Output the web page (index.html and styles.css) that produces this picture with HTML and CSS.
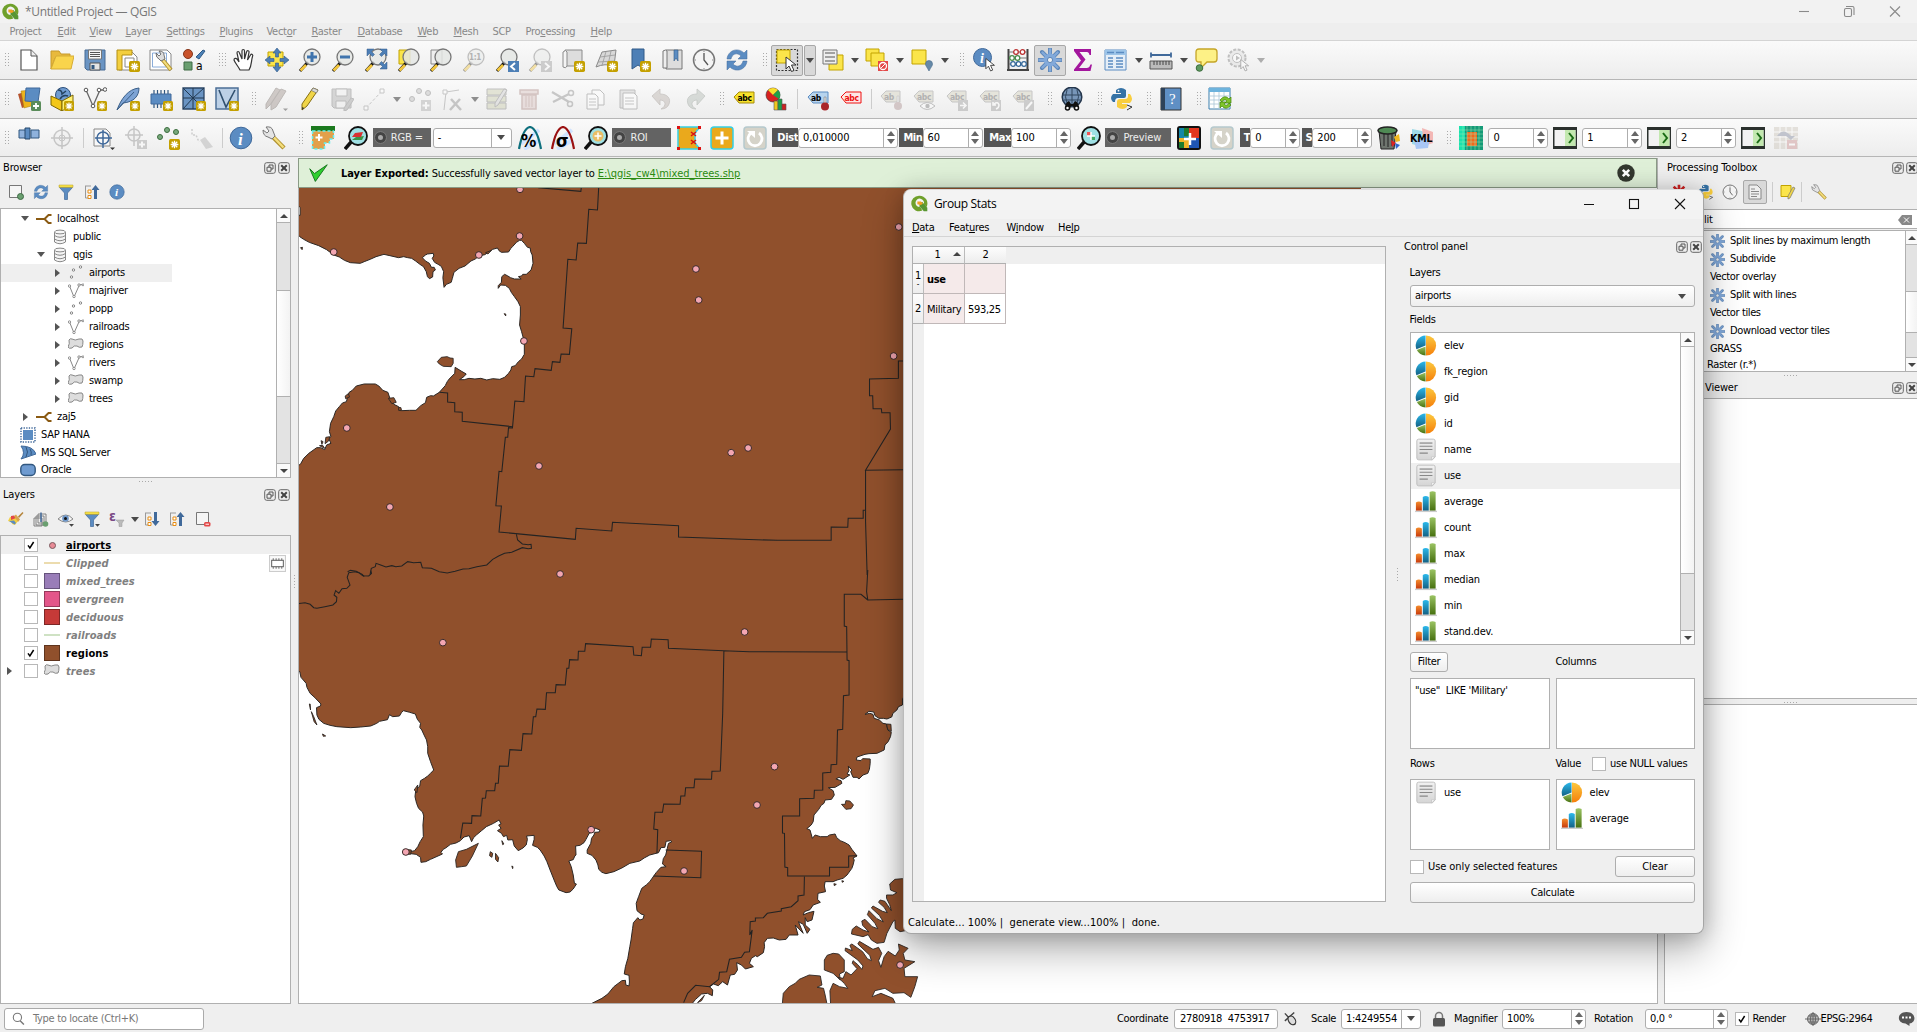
FILE: index.html
```html
<!DOCTYPE html>
<html lang="en">
<head>
<meta charset="utf-8">
<title>*Untitled Project — QGIS</title>
<link rel="stylesheet" href="styles.css">
</head>
<body>
<svg class="paints" width="0" height="0" aria-hidden="true">
<defs>
<linearGradient id="gOr" x1="0" y1="0" x2="0" y2="1"><stop offset="0" stop-color="#fcc93f"/><stop offset="1" stop-color="#f57f0a"/></linearGradient>
<linearGradient id="gBl" x1="0" y1="0" x2="0" y2="1"><stop offset="0" stop-color="#2bb9ec"/><stop offset="1" stop-color="#146184"/></linearGradient>
<linearGradient id="gGr" x1="0" y1="0" x2="0" y2="1"><stop offset="0" stop-color="#9bc463"/><stop offset="1" stop-color="#46700f"/></linearGradient>
<linearGradient id="gRd" x1="0" y1="0" x2="0" y2="1"><stop offset="0" stop-color="#f58d2c"/><stop offset="1" stop-color="#c63a0d"/></linearGradient>
<linearGradient id="gDoc" x1="0" y1="0" x2="0" y2="1"><stop offset="0" stop-color="#f1f1f1"/><stop offset="1" stop-color="#d5d5d5"/></linearGradient>
</defs>
</svg>
<svg class="sprite" aria-hidden="true">
<symbol id="star" viewBox="0 0 10 10"><rect width="10" height="10" rx="1.5" fill="#c4a000"/><path d="M5 1.5v7M1.5 5h7M2.5 2.5l5 5M7.500 2.500l-5 5" stroke="#fff" stroke-width="1.200"/></symbol>
<symbol id="plusb" viewBox="0 0 10 10"><rect width="10" height="10" rx="1.5" fill="#5a8c5a"/><path d="M5 2v6M2 5h6" stroke="#fff" stroke-width="1.800"/></symbol>
<symbol id="lens" viewBox="0 0 24 24"><path d="M10 14L2 23" stroke="#111" stroke-width="3"/><path d="M8 17L2.500 22.500" stroke="#f2c53a" stroke-width="2.600"/><circle cx="14" cy="9" r="8" fill="#e4e6e4" fill-opacity=".85" stroke="#777" stroke-width="1.300"/></symbol>
<symbol id="logo" viewBox="0 0 24 24"><path d="M12 1a11 11 0 1 0 4 21l-3-5a6 6 0 1 1 5-4l4 4A11 11 0 0 0 12 1z" fill="#6fa02b"/><path d="M12 11l4-1 7 8v5h-5l-6-7z" fill="#589632"/><path d="M9 9h5l3 3-3 2-5-1z" fill="#f0a023"/></symbol>
<symbol id="new" viewBox="0 0 24 24"><path d="M4 2h10l6 6v14H4z" fill="#fff" stroke="#555" stroke-width="1.200"/><path d="M14 2v6h6" fill="#eee" stroke="#555"/></symbol>
<symbol id="open" viewBox="0 0 24 24"><path d="M1 3h8l2 3h9v4H5L1 21z" fill="#e8b93c" stroke="#c69a2b"/><path d="M6 8h18l-3 13H1z" fill="#f9d44c" stroke="#d6ac34"/></symbol>
<symbol id="save" viewBox="0 0 24 24"><path d="M2 2h20v20H4l-2-2z" fill="#6a94c3" stroke="#476b94"/><path d="M5.500 2h13v9h-13z" fill="#f7f7f7" stroke="#777"/><path d="M7 4.500h10M7 6.500h10M7 8.500h10" stroke="#555"/><path d="M7 15h10v7H7z" fill="#e4e4e4" stroke="#555"/><path d="M8.500 17h3v4h-3z" fill="#31577f"/></symbol>
<symbol id="layout" viewBox="0 0 24 24"><path d="M3 3h12l6 6v13H3z" fill="#fff" stroke="#888"/><path d="M1 2h15v5H6v15H1z" fill="#f3cf3f" stroke="#b38f14"/><path d="M9 10h9v9H9z" fill="#fff" stroke="#888"/><use href="#star" x="13" y="13" width="11" height="11"/></symbol>
<symbol id="mgr" viewBox="0 0 24 24"><path d="M1 2h17l4 4v16H1z" fill="#fff" stroke="#888"/><path d="M3.500 5h14v14h-14z" fill="none" stroke="#6d98cf" stroke-width=".8"/><path d="M13 11l9 11" stroke="#b0912e" stroke-width="4"/><path d="M13 11l8.500 10.500" stroke="#f4de7c" stroke-width="2"/><path d="M7 5l3 3 2-2-2-3q5 0 5 4l1 4-4 2-2-2Q7 10 7 5z" fill="#ddd" stroke="#666" stroke-width=".9"/></symbol>
<symbol id="style" viewBox="0 0 24 24"><circle cx="6" cy="6" r="4.500" fill="#c9532b" stroke="#84361b"/><path d="M14 9l7-7 2 1-6 8z" fill="#4d82b8" stroke="#2f5a86"/><path d="M2 14h8v8H2z" fill="#6a9f70" stroke="#3f6b45"/><text x="14" y="22" font-size="12">a</text></symbol>
<symbol id="hand" viewBox="0 0 24 24"><path d="M8 22c-2-4-5-7-6-10 0-2 2-2 3-1l2 3L5 5c0-2 2-2 2.500 0L10 11V3c0-2 2.500-2 2.500 0v8l2-7c.5-2 3-1.500 2.500.500L15.500 12l3-5c1-1.500 3-.5 2 1.500C19 13 20 17 17 22z" fill="#fff" stroke="#333" stroke-width="1.200"/></symbol>
<symbol id="pansel" viewBox="0 0 24 24"><path d="M3 4h15v14H3z" fill="#fbe54a" stroke="#c2a300"/><path d="M12 0l4 5h-2.500v4h-3V5H8zM24 12l-5 4v-2.500h-4v-3h4V8zM12 24l4-5h-2.500v-4h-3v4H8zM0 12l5 4v-2.500h4v-3H5V8z" fill="#4d7fb6" stroke="#315a88" stroke-width=".6"/></symbol>
<symbol id="zin" viewBox="0 0 24 24"><use href="#lens"/><path d="M14 4v10M9 9h10" stroke="#3f74ad" stroke-width="3"/></symbol>
<symbol id="zout" viewBox="0 0 24 24"><use href="#lens"/><path d="M9 9h10" stroke="#3f74ad" stroke-width="3"/></symbol>
<symbol id="zfull" viewBox="0 0 24 24"><use href="#lens"/><path d="M3 1h7L7.500 3.500l3 3-2 2-3-3L3 8zM23 1h-7l2.500 2.500-3 3 2 2 3-3L23 8zM23 21h-7l2.500-2.500-3-3 2-2 3 3L23 14z" fill="#4d7fb6" stroke="#315a88" stroke-width=".5"/></symbol>
<symbol id="zsel" viewBox="0 0 24 24"><path d="M2 2h11v14H2z" fill="#fbe54a" stroke="#c2a300"/><use href="#lens"/></symbol>
<symbol id="zlay" viewBox="0 0 24 24"><path d="M2 2h11v14H2z" fill="#eee" stroke="#888"/><use href="#lens"/></symbol>
<symbol id="znat" viewBox="0 0 24 24"><use href="#lens"/><text x="7" y="12" font-size="8" font-weight="bold" fill="#555">1:1</text></symbol>
<symbol id="zlast" viewBox="0 0 24 24"><use href="#lens"/><path d="M13 13h11v11H13z" fill="#4d7fb6"/><path d="M20 15l-4 3.500 4 3.500" fill="none" stroke="#fff" stroke-width="2"/></symbol>
<symbol id="znext" viewBox="0 0 24 24"><use href="#lens"/><path d="M13 13h11v11H13z" fill="#999"/><path d="M17 15l4 3.500-4 3.500" fill="none" stroke="#fff" stroke-width="2"/></symbol>
<symbol id="mapv" viewBox="0 0 24 24"><path d="M4 2h17v16H4z" fill="#ddd" stroke="#8a8a8a"/><path d="M2 4q3-3 4 0v14q-1 3-4 1z" fill="#f4f4f4" stroke="#8a8a8a"/><use href="#star" x="13" y="13" width="11" height="11"/></symbol>
<symbol id="map3" viewBox="0 0 24 24"><path d="M8 4l14-2-2 16q-9-3-18 1z" fill="#d8d8d8" stroke="#8a8a8a"/><path d="M12 3.500l-4 14M17 3l-3 14M6 9l15-2M4 14l16-1" stroke="#999" stroke-width=".8" fill="none"/><use href="#star" x="13" y="13" width="11" height="11"/></symbol>
<symbol id="bmn" viewBox="0 0 24 24"><path d="M5 1h12v20l-6-4-6 4z" fill="#4d7fb6" stroke="#315a88"/><use href="#star" x="13" y="13" width="11" height="11"/></symbol>
<symbol id="bm" viewBox="0 0 24 24"><path d="M6 2h16v19H6z" fill="#ddd" stroke="#777"/><path d="M3 3q3-2 4 0v17H3z" fill="#eee" stroke="#777"/><path d="M14 2h4v11l-2-3-2 3z" fill="#5b8cc2" stroke="#315a88" stroke-width=".6"/></symbol>
<symbol id="clock" viewBox="0 0 24 24"><circle cx="12" cy="12" r="10.500" fill="#f4f4f4" stroke="#777" stroke-width="1.500"/><path d="M12 5v7l4 5" fill="none" stroke="#555" stroke-width="1.300"/><path d="M12 2.500v1.500M12 20v1.500M2.500 12H4M20 12h1.500" stroke="#888"/></symbol>
<symbol id="refresh" viewBox="0 0 24 24"><path d="M2 11C3 2 13-1 19 5l3-3v9h-9l3-3c-4-4-9-2-10 3z" fill="#5b8cc2" stroke="#40699a" stroke-width=".5"/><path d="M22 13c-1 9-11 12-17 6l-3 3v-9h9l-3 3c4 4 9 2 10-3z" fill="#5b8cc2" stroke="#40699a" stroke-width=".5"/></symbol>
<symbol id="cursor" viewBox="0 0 14 16"><path d="M1 1v12l3-3 2.500 5.500 2.500-1L6.500 9H11z" fill="#fff" stroke="#333"/></symbol>
<symbol id="sel" viewBox="0 0 24 24"><path d="M1.500 1.500h21v21h-21z" fill="none" stroke="#333" stroke-dasharray="2 1.500" stroke-width="1.200"/><path d="M2 2h13v13H2z" fill="#fbe54a" stroke="#c2a300"/><use href="#cursor" x="10" y="8" width="14" height="16"/></symbol>
<symbol id="self" viewBox="0 0 24 24"><path d="M8 7h14v15H8z" fill="#fbe54a" stroke="#c2a300"/><path d="M2 2h14v14H2z" fill="#eee" stroke="#777"/><path d="M4 5h10M4 9h10M4 13h10" stroke="#888" stroke-width="1.600"/></symbol>
<symbol id="desel" viewBox="0 0 24 24"><path d="M1 1h13v12H1z" fill="#fbe54a" stroke="#c2a300"/><path d="M6 5h13v13H6z" fill="#fbe54a" stroke="#c2a300"/><path d="M13 13h10v10H13z" fill="#e34848"/><circle cx="18" cy="18" r="3.500" fill="none" stroke="#fff" stroke-width="1.300"/><path d="M16 20l4-4" stroke="#fff"/></symbol>
<symbol id="selloc" viewBox="0 0 24 24"><path d="M2 2h14v14H2z" fill="#fbe54a" stroke="#c2a300"/><path d="M19 23c-2-4-3.500-5-3.500-7a3.500 3.500 0 0 1 7 0c0 2-1.500 3-3.500 7z" fill="#6689a8" stroke="#496b89" stroke-width=".6"/></symbol>
<symbol id="ident" viewBox="0 0 24 24"><circle cx="9.500" cy="9.500" r="9" fill="#5b8cc2" stroke="#40699a"/><text x="7" y="14.500" font-size="14" font-style="italic" font-weight="bold" font-family="Liberation Serif, serif" fill="#fff">i</text><use href="#cursor" x="12" y="9" width="12" height="15"/></symbol>
<symbol id="abacus" viewBox="0 0 24 24"><path d="M2.500 1v21M21.500 1v21M1 22h22" stroke="#444" stroke-width="2"/><path d="M3 4h18M3 10h18M3 16h18" stroke="#777"/><g stroke-width="1.300" fill="#fff"><g stroke="#b33"><circle cx="10" cy="4" r="2.300"/><circle cx="16.500" cy="4" r="2.300"/></g><g stroke="#4a8b4a"><circle cx="6" cy="10" r="2.300"/><circle cx="11.500" cy="10" r="2.300"/></g><g stroke="#36699b"><circle cx="7" cy="16" r="2.300"/><circle cx="12.500" cy="16" r="2.300"/><circle cx="18" cy="16" r="2.300"/></g></g></symbol>
<symbol id="gear" viewBox="0 0 24 24"><path d="M12 1v22M1 12h22M4 4l16 16M20 4L4 20" stroke="#5c86b8" stroke-width="4" stroke-linecap="round"/><path d="M12 1.500v21M1.500 12h21M4.500 4.500l15 15M19.500 4.500l-15 15" stroke="#82a9da" stroke-width="2.400" stroke-linecap="round"/><circle cx="12" cy="12" r="6.500" fill="#82a9da"/><circle cx="12" cy="12" r="2.600" fill="#efefef" stroke="#5c86b8"/></symbol>
<symbol id="sigma" viewBox="0 0 24 24"><path d="M3 1h17v6h-1.500c-.5-2.500-1.500-3-4-3H8.500l6 7.500L8 20h7c3 0 3.500-1 4.500-3.500H21L19.500 23H3v-1.500l7-9L3 3z" fill="#a3169d"/></symbol>
<symbol id="table" viewBox="0 0 24 24"><path d="M1 2h21v20H1z" fill="#e5eef7" stroke="#5b8cc2"/><path d="M1 2h21v5H1z" fill="#9cc4e8"/><path d="M3 4.500h7M12 4.500h8M4 10h5M12 10h7M4 13h5M12 13h7M4 16h5M12 16h7M4 19h5M12 19h7" stroke="#5b8cc2" stroke-width="1.300"/></symbol>
<symbol id="meas" viewBox="0 0 24 24"><path d="M2 7h20M2 4.500v5M22 4.500v5" stroke="#40699a" stroke-width="1.800"/><path d="M1 13h22v8H1z" fill="#bbb" stroke="#555"/><path d="M5 13v4M8 13v4M11 13v4M14 13v4M17 13v4M20 13v4" stroke="#444"/></symbol>
<symbol id="tip" viewBox="0 0 24 24"><path d="M5 1h15q3 0 3 3v7q0 3-3 3h-7l-6 6v-6H5q-3 0-3-3V4q0-3 3-3z" fill="#fdf186" stroke="#c5a527" stroke-width="1.300"/><circle cx="5.500" cy="20" r="3.300" fill="#5f9a60" stroke="#3c6d3e"/></symbol>
<symbol id="run" viewBox="0 0 24 24"><circle cx="10" cy="10" r="8.500" fill="#ddd" stroke="#777" stroke-width="2" stroke-dasharray="3 1.500"/><circle cx="10" cy="10" r="4.500" fill="#fff" stroke="#777"/><path d="M9 7.500l4 2.500-4 2.500z" fill="#777"/><use href="#cursor" x="13" y="10" width="11" height="14"/></symbol>
<symbol id="ds" viewBox="0 0 24 24"><path d="M1 7l10-3 3 13-9 4z" fill="#b5532d"/><path d="M4 4l11-1 3 15-11 3z" fill="#edb41d" stroke="#a37a0c" stroke-width=".5"/><path d="M9 1h14l-2 14-13-1z" fill="#5b8cc2" stroke="#40699a"/><use href="#plusb" x="14" y="14" width="10" height="10"/></symbol>
<symbol id="gpkg" viewBox="0 0 24 24"><circle cx="13" cy="8" r="7.500" fill="#6f9bd0" stroke="#2c4f7a"/><path d="M8 3q4 0 4 4l4-3M10 12q3-5 8-3" stroke="#24425f" stroke-width="1.500" fill="none"/><path d="M1 9l11 5v10L1 18z" fill="#f3c718" stroke="#7d6600"/><path d="M12 14l11-6v9l-11 7z" fill="#fff176" stroke="#7d6600"/><use href="#star" x="14" y="14" width="10" height="10"/></symbol>
<symbol id="vline" viewBox="0 0 24 24"><path d="M3 3l7 16L17 3h4" fill="none" stroke="#666" stroke-width="1.300"/><g fill="#fff" stroke="#555"><circle cx="3" cy="3" r="1.800"/><circle cx="10" cy="19" r="1.800"/><circle cx="16" cy="3" r="1.800"/><circle cx="22" cy="2.500" r="1.800"/></g></symbol>
<symbol id="shp" viewBox="0 0 24 24"><use href="#vline"/><use href="#star" x="14" y="14" width="10" height="10"/></symbol>
<symbol id="quill" viewBox="0 0 24 24"><path d="M1 23C5 12 12 2 23 1c0 8-5 14-16 15z" fill="#7da3d4" stroke="#3b5f88"/><path d="M1 23L18 5" stroke="#3b5f88"/><use href="#star" x="14" y="14" width="10" height="10"/></symbol>
<symbol id="chip" viewBox="0 0 24 24"><path d="M5 3v18M8.500 3v18M12 3v18M15.500 3v18M19 3v18" stroke="#31577f" stroke-width="1.200"/><path d="M2 7h20v10H2z" fill="#5b8cc2" stroke="#40699a"/><use href="#star" x="14" y="14" width="10" height="10"/></symbol>
<symbol id="mesh" viewBox="0 0 24 24"><path d="M1 1h21v21H1z" fill="#6a94c3" stroke="#2b4666" stroke-width="1.300"/><path d="M1 11h21M11 1v21M1 1l10 10M22 1L11 11M11 11l11 11M1 22l10-11" stroke="#22384f" fill="none"/><use href="#star" x="14" y="14" width="10" height="10"/></symbol>
<symbol id="virt" viewBox="0 0 24 24"><path d="M1 1h22v21H1z" fill="#bcd0e6" stroke="#4c6f97" stroke-width="1.500"/><path d="M4 3l7 17L20 3" fill="none" stroke="#31506f" stroke-width="1.600"/><use href="#star" x="14" y="14" width="10" height="10"/></symbol>
<symbol id="pencil" viewBox="0 0 24 24"><path d="M16 1l5 2L10 19l-5 4 0-6z" fill="#f0d548" stroke="#866f13"/><path d="M16 1l5 2-1.500 3-5-2.500z" fill="#d9d9d9" stroke="#777" stroke-width=".7"/><path d="M5 23l.2-3 2 1z" fill="#333"/></symbol>
<symbol id="pencils" viewBox="0 0 24 24"><path d="M12 1l4 2L6 18l-4 4V17zM17 2l5 2L12 20l-5 3v-6z" fill="#9a8d87" stroke="#726862"/><path d="M19 21.500h5l-2.500 2.500z" fill="#333"/></symbol>
<symbol id="saveed" viewBox="0 0 24 24"><path d="M2 2h19v19H4l-2-2z" fill="#aaa" stroke="#777"/><path d="M6 2h11v7H6zM6 14h10v7H6z" fill="#eee" stroke="#777"/><path d="M21 11l3 1-7 11-3 1v-3z" fill="#999" stroke="#777"/></symbol>
<symbol id="seg" viewBox="0 0 24 24"><path d="M3 21L19 4" stroke="#888" stroke-dasharray="3 2"/><path d="M1 19h4v4H1zM17 2h4v4h-4z" fill="#fff" stroke="#888"/></symbol>
<symbol id="pts" viewBox="0 0 24 24"><g fill="#bbb" stroke="#777"><circle cx="4" cy="12" r="2.500"/><circle cx="11" cy="4" r="2.500"/><circle cx="20" cy="6" r="2.500"/></g><path d="M13 13h10v11H13z" fill="#aaa"/><path d="M18 15v7M14.500 18.500h7" stroke="#fff" stroke-width="2"/></symbol>
<symbol id="vtx" viewBox="0 0 24 24"><path d="M4 23L6 5l13-2" fill="none" stroke="#888"/><path d="M3 3h4v4H3z" fill="#fff" stroke="#888"/><path d="M10 23L20 12M11 12l10 11" stroke="#888" stroke-width="2.500"/></symbol>
<symbol id="attr" viewBox="0 0 24 24"><path d="M2 2h19v6H2zM2 9h19v6H2zM2 16h19v6H2z" fill="#c8cba8" stroke="#777"/><path d="M19 2l3 1-9 15-3 2v-4z" fill="#ccc" stroke="#777"/></symbol>
<symbol id="bin" viewBox="0 0 24 24"><path d="M2 3h18v4H2zM4 8h14v14H4z" fill="#d8c0bd" stroke="#a8837d" stroke-width="1.500"/><path d="M8 9v11M11 9v11M14 9v11" stroke="#a8837d"/></symbol>
<symbol id="cut" viewBox="0 0 24 24"><path d="M1 5l17 10M2 15L18 7" stroke="#888" stroke-width="2.200"/><circle cx="20" cy="6" r="2.500" fill="none" stroke="#888" stroke-width="1.500"/><circle cx="19" cy="17" r="2.500" fill="none" stroke="#888" stroke-width="1.500"/></symbol>
<symbol id="copy" viewBox="0 0 24 24"><path d="M8 3h8l4 4v11H8z" fill="#fff" stroke="#777"/><path d="M3 7h8l3 3v12H3z" fill="#fff" stroke="#777"/><path d="M5 12h7M5 15h7M5 18h7" stroke="#888"/></symbol>
<symbol id="paste" viewBox="0 0 24 24"><path d="M3 3h15v18H3z" fill="#ccc" stroke="#777"/><path d="M6 6h11l3 3v13H6z" fill="#fff" stroke="#777"/><path d="M8 11h9M8 14h9M8 17h9" stroke="#888"/></symbol>
<symbol id="undo" viewBox="0 0 24 24"><path d="M2 9l8-7v5c8 0 11 5 9 10-1 3-4 5-8 5 6-3 5-9-1-9v5z" fill="#b7aea8" stroke="#8d857f" stroke-width=".8"/></symbol>
<symbol id="redo" viewBox="0 0 24 24"><path d="M22 9l-8-7v5C6 7 3 12 5 17c1 3 4 5 8 5-6-3-5-9 1-9v5z" fill="#aeb7b0" stroke="#858d87" stroke-width=".8"/></symbol>
<symbol id="tagy" viewBox="0 0 24 24"><path d="M2 10l5-5h15v11H7z" fill="#f7e12c" stroke="#a48b0b"/><text x="5.500" y="13.500" font-size="8.500" font-weight="bold">abc</text></symbol>
<symbol id="tagb" viewBox="0 0 24 24"><path d="M2 10l5-5h15v11H7z" fill="#b7d4ee" stroke="#5b8cc2"/><text x="5" y="13.500" font-size="8.500" font-weight="bold">ab</text><path d="M18 10h2v7h-2z" fill="#ddd" stroke="#777" stroke-width=".5"/><circle cx="19" cy="19.500" r="4" fill="#a9262b"/></symbol>
<symbol id="tagr" viewBox="0 0 24 24"><path d="M2 10l5-5h15v11H7z" fill="#fde6e6" stroke="#e11"/><text x="5.500" y="13.500" font-size="8.500" font-weight="bold" fill="#e11">abc</text></symbol>
<symbol id="tag0" viewBox="0 0 24 24"><path d="M2 9l5-5h14v11H7z" fill="#d0cdb8" stroke="#888"/><text x="5" y="12.500" font-size="8.500" font-weight="bold" fill="#555">abc</text></symbol>
<symbol id="tagm" viewBox="0 0 24 24"><use href="#tag0"/><path d="M13 13h10v11H13z" fill="#999"/><path d="M15 18.500h6M18 15.500l3 3-3 3" stroke="#fff" stroke-width="1.500" fill="none"/></symbol>
<symbol id="tagt" viewBox="0 0 24 24"><use href="#tag0"/><path d="M13 13h10v11H13z" fill="#999"/><path d="M16 17q4-3 5 1 0 3-3 4M15 15v3h3" stroke="#fff" stroke-width="1.500" fill="none"/></symbol>
<symbol id="tagc" viewBox="0 0 24 24"><use href="#tag0"/><path d="M13 13h10v11H13z" fill="#999"/><path d="M15 22l6-7" stroke="#fff" stroke-width="2" fill="none"/></symbol>
<symbol id="tagp" viewBox="0 0 24 24"><path d="M2 9l5-5h14v11H7z" fill="#d0cdb8" stroke="#888"/><text x="5" y="12.500" font-size="8.500" font-weight="bold" fill="#555">ab</text><path d="M18 9h2v7h-2z" fill="#ddd" stroke="#777" stroke-width=".5"/><circle cx="19" cy="19" r="4" fill="#a98c8c"/></symbol>
<symbol id="tage" viewBox="0 0 24 24"><use href="#tag0"/><path d="M8 19q7-7 15 0-8 7-15 0z" fill="#fff" stroke="#777"/><circle cx="15.500" cy="19" r="2.200" fill="#777"/></symbol>
<symbol id="diag" viewBox="0 0 24 24"><circle cx="8" cy="8" r="7" fill="#d72020" stroke="#333" stroke-width=".6"/><path d="M8 8L3 3a7 7 0 0 1 10 0z" fill="#f7e12c"/><path d="M8 8l5-5a7 7 0 0 1 1 9z" fill="#1fa04a"/><path d="M9 14h4v9H9z" fill="#f2c81d" stroke="#555" stroke-width=".6"/><path d="M13 12h4v11h-4z" fill="#1fa04a" stroke="#555" stroke-width=".6"/><path d="M17 17h4v6h-4z" fill="#c22" stroke="#555" stroke-width=".6"/></symbol>
<symbol id="globe" viewBox="0 0 24 24"><circle cx="12" cy="10" r="9.800" fill="#7896b8" stroke="#24364c" stroke-width="1.500"/><path d="M3 8h18M4 13h16M12 1v17M7 3q-3 7 0 13M17 3q3 7 0 13" stroke="#31475f" fill="none"/><path d="M5 22q0-7 4-8l2 3h2l2-3q4 1 4 8h-5l-1-3h-2l-1 3z" fill="#111"/><circle cx="7.500" cy="21" r="2" fill="#fff" stroke="#111" stroke-width="1.500"/><circle cx="16.500" cy="21" r="2" fill="#fff" stroke="#111" stroke-width="1.500"/></symbol>
<symbol id="py" viewBox="0 0 24 24"><path d="M6 3q5-4 10 0v6q0 2-2 2H8q-3 0-3 4H3Q-1 11 3 7h8V6H6z" fill="#3572a5"/><path d="M18 7h2q4 5 0 9h-8v1h5v3q-4 4-10 0v-5q0-3 3-3h5q3 0 3-3z" fill="#f9ce3e"/><circle cx="8.500" cy="3.700" r=".9" fill="#fff"/><path d="M17 18l5 2-5 3" fill="none" stroke="#333"/></symbol>
<symbol id="help" viewBox="0 0 24 24"><path d="M2 1h20v22H2z" fill="#5f8fc4" stroke="#333"/><path d="M2 1h4v22H2z" fill="#2e4259"/><text x="10" y="17" font-size="15" font-family="Liberation Serif, serif" fill="#fff">?</text></symbol>
<symbol id="tblr" viewBox="0 0 24 24"><path d="M1 1h21v21H1z" fill="#fff" stroke="#3b7fae"/><path d="M1 1h21v4H1z" fill="#6db3dd"/><path d="M1 9h21M1 13h21M1 17h21M6 5v17M11 5v17M16 5v17" stroke="#a9c5d6" stroke-width=".8"/><path d="M12 13q5-6 9-1l2-2v6h-6l2-2q-3-3-5 1zM23 18q-5 6-9 1l-2 2v-6h6l-2 2q3 3 5-1z" fill="#7fc42c" stroke="#41830a" stroke-width=".7"/></symbol>
<symbol id="georef" viewBox="0 0 24 24"><path d="M2 4h7v8H2zM14 4h8v8h-8z" fill="#8fb2dc" stroke="#31577f"/><path d="M8 2h5v11H8z" fill="#5b8cc2" stroke="#27486c"/></symbol>
<symbol id="cross" viewBox="0 0 24 24"><circle cx="12" cy="12" r="8" fill="#eee" stroke="#888" stroke-width="1.500"/><path d="M12 1v22M1 12h22" stroke="#888" stroke-width="1.500"/><circle cx="12" cy="12" r="3" fill="none" stroke="#888"/></symbol>
<symbol id="crossp" viewBox="0 0 24 24"><circle cx="10" cy="9" r="6" fill="#eee" stroke="#888" stroke-width="1.500"/><path d="M10 0v20M1 9h18" stroke="#888" stroke-width="1.500"/><path d="M13 14h10v9H13z" fill="#999"/><path d="M18 15.500v6M15 18.500h6" stroke="#fff" stroke-width="2"/></symbol>
<symbol id="crossb" viewBox="0 0 24 24"><path d="M3 3h12l4 4v13H3z" fill="#f8f8f8" stroke="#888"/><circle cx="12" cy="12" r="6" fill="none" stroke="#40699a" stroke-width="1.500"/><path d="M12 4v18M4 12h17" stroke="#40699a" stroke-width="1.500"/><path d="M19 21.500h5l-2.500 2.500z" fill="#333"/></symbol>
<symbol id="ptsg" viewBox="0 0 24 24"><g fill="#79a97d" stroke="#3c6d3e"><circle cx="3" cy="11" r="2.500"/><circle cx="10" cy="4" r="2.500"/><circle cx="19" cy="6" r="2.500"/></g><use href="#star" x="12" y="13" width="11" height="11"/></symbol>
<symbol id="path" viewBox="0 0 24 24"><path d="M2 3v6h4l3 7" stroke="#999" fill="none" stroke-dasharray="2 1.500" stroke-width="1.500"/><path d="M10 14l5-3 8 10-7 2z" fill="#aaa"/></symbol>
<symbol id="info" viewBox="0 0 24 24"><circle cx="12" cy="12" r="10.800" fill="#5b8cc2" stroke="#40699a"/><text x="9" y="18.500" font-size="17" font-style="italic" font-weight="bold" font-family="Liberation Serif, serif" fill="#fff">i</text></symbol>
<symbol id="wrench" viewBox="0 0 24 24"><path d="M10 10l12 12" stroke="#b0912e" stroke-width="4.500"/><path d="M11 10.500l10.500 11" stroke="#f4de7c" stroke-width="2.500"/><path d="M1 4l4 3 2-2-3-4q6-1 7 4l2 5-3 3-4-2Q1 10 1 4z" fill="#e4e4e4" stroke="#777"/></symbol>
<symbol id="roi" viewBox="0 0 24 24"><path d="M0 0h24v5H0z" fill="#1c7a1f"/><path d="M1 5h22v8h-4v4h-5v6H1z" fill="#e2a04a"/><path d="M1.500 5h21v8h-4v4h-5v6h-12z" fill="none" stroke="#6ee" stroke-width="1.500" stroke-dasharray="3 2"/><path d="M8 8v7M4.500 11.500h7" stroke="#fff" stroke-width="2"/></symbol>
<symbol id="bl" viewBox="0 0 24 24"><path d="M8 15L1 23" stroke="#111" stroke-width="3.500"/><circle cx="14" cy="10" r="9" fill="#9fe0e4" stroke="#111" stroke-width="1.800"/></symbol>
<symbol id="bl1" viewBox="0 0 24 24"><use href="#bl"/><path d="M8 14l10 0 2-4-8 1z" fill="#3a9447"/><path d="M8 11l9 0 2-5-8 1z" fill="#d83131"/></symbol>
<symbol id="bl2" viewBox="0 0 24 24"><use href="#bl"/><circle cx="14" cy="10" r="5.500" fill="#e9bd66"/><path d="M14 6.500v7M10.500 10h7" stroke="#fff" stroke-width="1.500"/></symbol>
<symbol id="bl3" viewBox="0 0 24 24"><use href="#bl"/><path d="M10 6h4v4h-4z" fill="#e55"/><path d="M14 10h4v4h-4z" fill="#4a6"/><path d="M14 6v8M10 10h8" stroke="#fff" stroke-width="1.500"/></symbol>
<symbol id="pct" viewBox="0 0 24 24"><path d="M3 18l18-14M6 23L22 14" stroke="#cfe3ff" stroke-width="4"/><path d="M1 23Q5 2 12 1q7 1 11 22" fill="none" stroke="#0d6f7d" stroke-width="2.200"/><text x="3" y="21" font-size="17" font-weight="bold">%</text></symbol>
<symbol id="sig" viewBox="0 0 24 24"><path d="M3 18l18-14M6 23L22 14" stroke="#cfe3ff" stroke-width="4"/><path d="M1 23Q5 2 12 1q7 1 11 22" fill="none" stroke="#9b1111" stroke-width="2.200"/><text x="5" y="21" font-size="18" font-weight="bold">σ</text></symbol>
<symbol id="roix" viewBox="0 0 24 24"><path d="M1 1h22l-5 6v10l5 6H1z" fill="#eaa91c" stroke="#35cfe5" stroke-width="1.500"/><path d="M0 0h3v3H0zM21 0h3v3h-3zM0 21h3v3H0zM21 21h3v3h-3z" fill="#d11"/><path d="M14 6l5 4M19 6l-5 4M14 14l5 4M19 14l-5 4" stroke="#d11" stroke-width="1.500"/></symbol>
<symbol id="roip" viewBox="0 0 24 24"><rect x="1" y="1" width="22" height="22" rx="3" fill="#eaa91c" stroke="#35cfe5" stroke-width="1.500"/><path d="M12 5.500v13M5.500 12h13" stroke="#fff" stroke-width="3"/></symbol>
<symbol id="roir" viewBox="0 0 24 24"><rect x="1" y="1" width="22" height="22" rx="3" fill="#d5d3c9" stroke="#b5c9cd" stroke-width="1.500"/><path d="M8 7a7 7 0 1 0 8 0" fill="none" stroke="#fff" stroke-width="2.800"/><path d="M4 5h8v7z" fill="#fff"/></symbol>
<symbol id="rgbp" viewBox="0 0 24 24"><rect width="24" height="24" rx="3" fill="#111"/><path d="M2 2h10v10H2z" fill="#1287a8"/><path d="M12 2h10v10H12z" fill="#e3361e"/><path d="M2 12h10v10H2z" fill="#f0b429"/><path d="M12 12h10v10H12z" fill="#1f56b5"/><path d="M7 2h5v8H7zM2 16h5v6H2z" fill="#1d7c2f"/><path d="M13 7v12M7 13h12" stroke="#fff" stroke-width="2.500"/></symbol>
<symbol id="can" viewBox="0 0 24 24"><path d="M2 5h17l-2 18H4z" fill="#6e756e" stroke="#222"/><path d="M7 8v12M11 8v13M15 8v12" stroke="#222"/><ellipse cx="10.500" cy="4.500" rx="9.500" ry="3.500" fill="#4f8a54" stroke="#222" stroke-width="1.600"/><path d="M17 11l5-3 1 7-4 1z" fill="#f1b81f"/><path d="M14 14l5 3-4 4z" fill="#d22"/><path d="M18 17l5 2-4 4z" fill="#36c"/></symbol>
<symbol id="kml" viewBox="0 0 24 24"><path d="M2 3l10 2 8 6-4 11-14-4z" fill="#9fdbe8"/><path d="M12 2l11 4v11l-9 3z" fill="#f3b7b5"/><path d="M4 14l16-2-2 10-12 1z" fill="#a9c7f5"/><text x="0" y="16" font-size="10.500" font-weight="bold">KML</text></symbol>
<symbol id="grid" viewBox="0 0 24 24"><path d="M0 0h24v24H0z" fill="#159a78"/><path d="M0 0h6v24H0z" fill="#19e2ae"/><path d="M8 6h10v14H8z" fill="#f26a1c"/><path d="M0 4h24M0 8h24M0 12h24M0 16h24M0 20h24M4 0v24M8 0v24M12 0v24M16 0v24M20 0v24" stroke="#9de8b0" stroke-opacity=".6" stroke-width=".8"/></symbol>
<symbol id="next" viewBox="0 0 24 24"><path d="M0 1h24v22H0z" fill="#2b312e"/><path d="M1.500 4h21v16h-21z" fill="#f2f2f2"/><path d="M12 4h10.500v16H12z" fill="#c3e8b0"/><path d="M16 7l4 5-4 5" fill="none" stroke="#1b6b16" stroke-width="2"/></symbol>
<symbol id="gridx" viewBox="0 0 24 24"><path d="M0 1h24v22H0z" fill="#c9c2b6"/><path d="M0 6h24M0 11h24M0 16h24M6 1v22M12 1v22M18 1v22" stroke="#fff"/><path d="M3 10q6-9 14 0h4l-4 4-5-4" fill="#7a8298"/><path d="M13 14h10v9H13z" fill="#c98a8a"/><path d="M15 18.500h6" stroke="#fff" stroke-width="2"/></symbol>
<symbol id="pie" viewBox="0 0 24 24"><path d="M12 1a11 11 0 0 1 0 22z" fill="url(#gOr)"/><path d="M11.500 1v11L1.500 16A11 11 0 0 1 11.500 1z" fill="url(#gBl)"/><path d="M11.500 13v10A11 11 0 0 1 2 17z" fill="url(#gGr)"/></symbol>
<symbol id="bars" viewBox="0 0 24 24"><path d="M1 13q3-2 6.500 0v9H1z" fill="url(#gRd)"/><path d="M8.500 7q3-2 6.500 0v15H8.500z" fill="url(#gBl)"/><path d="M16 1.500q3-1.500 6.500 0V22H16z" fill="url(#gGr)"/><path d="M0 22.800h24" stroke="#ccc" stroke-width="1.500"/></symbol>
<symbol id="doc" viewBox="0 0 24 24"><path d="M4 .7h16q2 0 2 2V20l-3 3.300H4q-2 0-2-2V2.700q0-2 2-2z" fill="url(#gDoc)" stroke="#bbb"/><path d="M5 5h14" stroke="#aaa" stroke-width="2"/><path d="M5 8.500h14M5 12h14M5 16h9" stroke="#888" stroke-width="1.200"/><path d="M18 23.300V20h4z" fill="#fff" stroke="#bbb" stroke-width=".7"/></symbol>
<symbol id="float" viewBox="0 0 12 12"><rect x=".7" y=".7" width="10.600" height="10.600" rx="2" fill="#eee" stroke="#666"/><path d="M5 3h4v4H5z" fill="none" stroke="#555"/><path d="M3 5.200h4v4H3z" fill="#eee" stroke="#555"/></symbol>
<symbol id="close" viewBox="0 0 12 12"><rect x=".7" y=".7" width="10.600" height="10.600" rx="2" fill="#eee" stroke="#666"/><path d="M3.200 3.200l5.600 5.600M8.800 3.200L3.200 8.800" stroke="#444" stroke-width="2"/></symbol>
<symbol id="addl" viewBox="0 0 16 16"><path d="M1.500 1.500h12v12h-12z" fill="#f5f5f5" stroke="#777"/><circle cx="12.500" cy="12.500" r="3" fill="#6a9f70" stroke="#3f6b45"/></symbol>
<symbol id="reml" viewBox="0 0 16 16"><path d="M1.500 1.500h12v12h-12z" fill="#f5f5f5" stroke="#777"/><rect x="9" y="11" width="6.500" height="4.500" rx="1.500" fill="#e34848"/><path d="M10.500 13.200h3.500" stroke="#fff"/></symbol>
<symbol id="funnel" viewBox="0 0 16 16"><path d="M1.500 3.500h13L9.500 9v6.500H6.500V9z" fill="#5b8cc2" stroke="#40699a" stroke-width=".7"/><path d="M1 1h14v2.300H1z" fill="#fbe54a" stroke="#b09a20" stroke-width=".5"/></symbol>
<symbol id="funneld" viewBox="0 0 16 16"><use href="#funnel"/><path d="M11 13h5l-2.500 2.800z" fill="#444"/></symbol>
<symbol id="treeup" viewBox="0 0 16 16"><path d="M1 2h6M1.500 2v12h4" stroke="#999" fill="none"/><path d="M4 6h3v3H4zM4 11.500h3v3H4z" fill="#fff" stroke="#e88d13"/><path d="M11.500 1l4 5h-2.500v9h-3V6H7.500z" fill="#40699a"/></symbol>
<symbol id="treedn" viewBox="0 0 16 16"><path d="M1 2h6M1.500 2v12h4" stroke="#999" fill="none"/><path d="M4 6h3v3H4zM4 11.500h3v3H4z" fill="#fff" stroke="#e88d13"/><path d="M11.500 15l4-5h-2.500V1h-3v9H7.500z" fill="#40699a"/></symbol>
<symbol id="brush" viewBox="0 0 16 16"><path d="M2 6l5-1 3 5-3 4-3-1q0-2-4-3z" fill="#f3cf3f"/><path d="M3 5l3-.5 2 2.500-5 2z" fill="#e34848"/><path d="M1 10l5-.5 2 2.500-1.500 1.500z" fill="#5b8cc2"/><path d="M6 5l2-1.500 4 5L10 11z" fill="#d9a54b"/><path d="M10 5.500l4.500-4.500 1 1-4.500 5z" fill="#b5853c"/></symbol>
<symbol id="grp" viewBox="0 0 16 16"><path d="M5 3h8v9H5zM3 5h8v9H3zM1 7h8v8H1z" fill="#eee" stroke="#777" stroke-width=".9"/><path d="M8 11V1.500" stroke="#40699a" stroke-width="1.500"/><circle cx="12.500" cy="13" r="2.800" fill="#6a9f70"/></symbol>
<symbol id="eye" viewBox="0 0 16 16"><path d="M0 8q8-8 15 0-7 6-15 0z" fill="#f4f4f4" stroke="#888"/><circle cx="7.500" cy="7.500" r="3.300" fill="#6e97c9"/><circle cx="7.500" cy="7.500" r="1.500" fill="#111"/><path d="M11 13h5l-2.500 2.800z" fill="#444"/></symbol>
<symbol id="eps" viewBox="0 0 16 16"><text x="0" y="9.500" font-size="14" font-weight="bold" fill="#7b4a86">ε</text><path d="M7 9h8l-2 3v3.500h-3V12z" fill="#bbb" stroke="#999" stroke-width=".5"/></symbol>
<symbol id="plug" viewBox="0 0 16 16"><path d="M0 8h9M15.500 4h-3L8.500 8l4 4h3" fill="none" stroke="#8a5a12" stroke-width="2"/></symbol>
<symbol id="db" viewBox="0 0 16 16"><path d="M2.500 3v10q5.500 3.500 11 0V3" fill="#f4f4f4" stroke="#888"/><ellipse cx="8" cy="3" rx="5.500" ry="1.900" fill="#f7f7f7" stroke="#888"/><path d="M2.500 6.500q5.500 3.500 11 0M2.500 10q5.500 3.500 11 0" fill="none" stroke="#888"/></symbol>
<symbol id="lpt" viewBox="0 0 16 16"><g fill="#fff" stroke="#777" stroke-width=".9"><circle cx="3.500" cy="12" r="1.200"/><circle cx="5.500" cy="5" r="1.200"/><circle cx="12.500" cy="2" r="1.200"/></g></symbol>
<symbol id="lln" viewBox="0 0 16 16"><path d="M1.500 3l4.500 11L11.500 1.700H15" fill="none" stroke="#888"/><g fill="#fff" stroke="#777" stroke-width=".8"><circle cx="1.500" cy="3" r="1.200"/><circle cx="6" cy="13.500" r="1.200"/><circle cx="11" cy="2" r="1.200"/><circle cx="15" cy="1.800" r="1"/></g></symbol>
<symbol id="lpg" viewBox="0 0 16 16"><path d="M1 3q1-2 3-1 3 2 7 0 4-1 4 2 0 4-1 6-3 1-5-1-3-1-5 2-3 1-4-1 2-3 1-7z" fill="#ddd" stroke="#888"/></symbol>
<symbol id="sap" viewBox="0 0 16 16"><rect x="1" y="1" width="14" height="14" fill="none" stroke="#40699a" stroke-width="1.500" stroke-dasharray="1.300 1.300"/><path d="M3 3h10v10H3z" fill="#5b8cc2"/></symbol>
<symbol id="ms" viewBox="0 0 16 16"><path d="M1 1q12 0 15 8L1 14q5-6 0-13z" fill="#5b8cc2" stroke="#40699a"/><path d="M6 2q3 5 0 10M10 4q2 3 1 6" fill="none" stroke="#27486c" stroke-width=".8"/></symbol>
<symbol id="ora" viewBox="0 0 16 16"><rect x=".8" y="2.500" width="14.400" height="11" rx="4" fill="#6f9bd0" stroke="#31577f" stroke-width="1.400"/></symbol>
<symbol id="mem" viewBox="0 0 16 16"><rect x=".5" y=".5" width="15" height="15" fill="#fafafa" stroke="#ccc"/><path d="M4 3v10M6.700 3v10M9.300 3v10M12 3v10" stroke="#777"/><rect x="2.500" y="5" width="11" height="6" fill="#fff" stroke="#666"/></symbol>
<symbol id="tick" viewBox="0 0 16 16"><path d="M4 8.500l2.500 3.500L11.500 4" fill="none" stroke="#000" stroke-width="2"/></symbol>
<symbol id="paper" viewBox="0 0 16 16"><path d="M2 1h8l4 4v10H2z" fill="#eee" stroke="#888"/><path d="M4 5h4M4 7.500h8M4 10h8M4 12.500h6" stroke="#888"/></symbol>
<symbol id="note" viewBox="0 0 16 16"><path d="M1 1.500h10v9l-2 2H1z" fill="#fbe54a" stroke="#c2a300"/><path d="M13 3l2 1-5 10-2 1V12z" fill="#f0d548" stroke="#777" stroke-width=".7"/></symbol>
<symbol id="redgear" viewBox="0 0 24 24"><path d="M12 1v22M1 12h22M4 4l16 16M20 4L4 20" stroke="#c22" stroke-width="4"/></symbol>
</svg>

<header class="titlebar"><svg class="i16"><use href="#logo"/></svg><span class="cap">*Untitled Project — QGIS</span>
<svg class="winctl" viewBox="0 0 116 14"><g fill="none" stroke="#8a8a8a" stroke-width="1.100"><path d="M3 7.500h10"/><rect x="48.500" y="4.500" width="7" height="8" rx="1.500"/><path d="M50 2.500h6.500q1.500 0 1.500 1.500v7"/><path d="M94 2.500l10 10M104 2.500L94 12.500"/></g></svg></header>
<nav class="menubar"><span>Pro<u>j</u>ect</span><span><u>E</u>dit</span><span><u>V</u>iew</span><span><u>L</u>ayer</span><span><u>S</u>ettings</span><span><u>P</u>lugins</span><span>Vect<u>o</u>r</span><span><u>R</u>aster</span><span><u>D</u>atabase</span><span><u>W</u>eb</span><span><u>M</u>esh</span><span>SCP</span><span>Pro<u>c</u>essing</span><span><u>H</u>elp</span></nav>

<div class="tb t1">
<i class="grip first"></i>
<svg class="ic"><use href="#new"/></svg><svg class="ic"><use href="#open"/></svg><svg class="ic"><use href="#save"/></svg><svg class="ic"><use href="#layout"/></svg><svg class="ic"><use href="#mgr"/></svg><svg class="ic"><use href="#style"/></svg>
<i class="grip"></i>
<svg class="ic"><use href="#hand"/></svg><svg class="ic"><use href="#pansel"/></svg><svg class="ic"><use href="#zin"/></svg><svg class="ic"><use href="#zout"/></svg><svg class="ic"><use href="#zfull"/></svg><svg class="ic"><use href="#zsel"/></svg><svg class="ic"><use href="#zlay"/></svg><svg class="ic off"><use href="#znat"/></svg><svg class="ic"><use href="#zlast"/></svg><svg class="ic off"><use href="#znext"/></svg><svg class="ic"><use href="#mapv"/></svg><svg class="ic"><use href="#map3"/></svg><svg class="ic"><use href="#bmn"/></svg><svg class="ic"><use href="#bm"/></svg><svg class="ic"><use href="#clock"/></svg><svg class="ic"><use href="#refresh"/></svg>
<i class="grip"></i>
<span class="down"><svg class="ic"><use href="#sel"/></svg></span><span class="down dd"><i class="ar"></i></span>
<svg class="ic"><use href="#self"/></svg><i class="ar"></i><svg class="ic"><use href="#desel"/></svg><i class="ar"></i><svg class="ic"><use href="#selloc"/></svg><i class="ar"></i>
<i class="grip"></i>
<svg class="ic"><use href="#ident"/></svg><svg class="ic"><use href="#abacus"/></svg><span class="down"><svg class="ic"><use href="#gear"/></svg></span><svg class="ic"><use href="#sigma"/></svg><svg class="ic"><use href="#table"/></svg><i class="ar"></i><svg class="ic"><use href="#meas"/></svg><i class="ar"></i><svg class="ic"><use href="#tip"/></svg><svg class="ic off"><use href="#run"/></svg><i class="ar off"></i>
</div>

<div class="tb t2">
<i class="grip first"></i>
<svg class="ic"><use href="#ds"/></svg><svg class="ic"><use href="#gpkg"/></svg><svg class="ic"><use href="#shp"/></svg><svg class="ic"><use href="#quill"/></svg><svg class="ic"><use href="#chip"/></svg><svg class="ic"><use href="#mesh"/></svg><svg class="ic"><use href="#virt"/></svg>
<i class="grip"></i>
<svg class="ic off"><use href="#pencils"/></svg><svg class="ic"><use href="#pencil"/></svg><svg class="ic off"><use href="#saveed"/></svg><svg class="ic off"><use href="#seg"/></svg><i class="ar mid"></i><svg class="ic off"><use href="#pts"/></svg><svg class="ic off"><use href="#vtx"/></svg><i class="ar mid"></i><svg class="ic off"><use href="#attr"/></svg><svg class="ic off"><use href="#bin"/></svg><svg class="ic off"><use href="#cut"/></svg><svg class="ic off"><use href="#copy"/></svg><svg class="ic off"><use href="#paste"/></svg><svg class="ic off"><use href="#undo"/></svg><svg class="ic off"><use href="#redo"/></svg>
<i class="grip"></i>
<svg class="ic"><use href="#tagy"/></svg><svg class="ic"><use href="#diag"/></svg><i class="sep"></i><svg class="ic"><use href="#tagb"/></svg><svg class="ic"><use href="#tagr"/></svg><i class="sep"></i><svg class="ic off"><use href="#tagp"/></svg><svg class="ic off"><use href="#tage"/></svg><svg class="ic off"><use href="#tagm"/></svg><svg class="ic off"><use href="#tagt"/></svg><svg class="ic off"><use href="#tagc"/></svg>
<i class="grip"></i><svg class="ic"><use href="#globe"/></svg><i class="grip"></i><svg class="ic"><use href="#py"/></svg><i class="grip"></i><svg class="ic"><use href="#help"/></svg><i class="grip"></i><svg class="ic"><use href="#tblr"/></svg>
</div>

<div class="tb t3">
<i class="grip first"></i>
<svg class="ic"><use href="#georef"/></svg><svg class="ic off"><use href="#cross"/></svg><i class="sep"></i><svg class="ic"><use href="#crossb"/></svg><svg class="ic off"><use href="#crossp"/></svg><svg class="ic"><use href="#ptsg"/></svg><svg class="ic off"><use href="#path"/></svg><i class="sep thin"></i><svg class="ic"><use href="#info"/></svg><svg class="ic"><use href="#wrench"/></svg>
<i class="grip"></i>
<svg class="ic"><use href="#roi"/></svg><svg class="ic"><use href="#bl1"/></svg><span class="dark rgb"><i class="knob"></i>RGB =</span><span class="combo c1"><b>-</b><em><i class="ar"></i></em></span>
<svg class="ic"><use href="#pct"/></svg><svg class="ic"><use href="#sig"/></svg><svg class="ic"><use href="#bl2"/></svg><span class="dark roi"><i class="knob"></i>ROI</span>
<svg class="ic"><use href="#roix"/></svg><svg class="ic"><use href="#roip"/></svg><svg class="ic"><use href="#roir"/></svg>
<span class="lab ld">Dist</span><span class="spin w100"><b>0,010000</b><em></em></span><span class="lab lm">Min</span><span class="spin w60"><b>60</b><em></em></span><span class="lab lx">Max</span><span class="spin w60"><b>100</b><em></em></span>
<svg class="ic pv"><use href="#bl3"/></svg><span class="dark prev"><i class="knob"></i>Preview</span><svg class="ic"><use href="#rgbp"/></svg><svg class="ic"><use href="#roir"/></svg><span class="lab lt">T</span><span class="spin w50"><b>0</b><em></em></span><span class="lab lt">S</span><span class="spin w60"><b>200</b><em></em></span>
<svg class="ic"><use href="#can"/></svg><svg class="ic"><use href="#kml"/></svg><i class="grip"></i><svg class="ic g1"><use href="#grid"/></svg>
<span class="spin w60"><b>0</b><em></em></span><svg class="ic nx"><use href="#next"/></svg><span class="spin w60"><b>1</b><em></em></span><svg class="ic nx"><use href="#next"/></svg><span class="spin w60"><b>2</b><em></em></span><svg class="ic nx"><use href="#next"/></svg><svg class="ic off"><use href="#gridx"/></svg>
</div>

<main class="work">
<aside class="left">
<div class="dockhead"><span>Browser</span><svg><use href="#float"/></svg><svg><use href="#close"/></svg></div>
<div class="minibar"><svg><use href="#addl"/></svg><svg><use href="#refresh"/></svg><svg><use href="#funnel"/></svg><svg><use href="#treeup"/></svg><svg><use href="#info"/></svg></div>
<div class="box browser">
<ul class="tree">
<li class="d1"><i class="op"></i><svg><use href="#plug"/></svg>localhost</li>
<li class="d2"><i></i><svg><use href="#db"/></svg>public</li>
<li class="d2"><i class="op"></i><svg><use href="#db"/></svg>qgis</li>
<li class="d3 on"><i class="cl"></i><svg><use href="#lpt"/></svg>airports</li>
<li class="d3"><i class="cl"></i><svg><use href="#lln"/></svg>majriver</li>
<li class="d3"><i class="cl"></i><svg><use href="#lpt"/></svg>popp</li>
<li class="d3"><i class="cl"></i><svg><use href="#lln"/></svg>railroads</li>
<li class="d3"><i class="cl"></i><svg><use href="#lpg"/></svg>regions</li>
<li class="d3"><i class="cl"></i><svg><use href="#lln"/></svg>rivers</li>
<li class="d3"><i class="cl"></i><svg><use href="#lpg"/></svg>swamp</li>
<li class="d3"><i class="cl"></i><svg><use href="#lpg"/></svg>trees</li>
<li class="d1"><i class="cl"></i><svg><use href="#plug"/></svg>zaj5</li>
<li class="d0"><i></i><svg><use href="#sap"/></svg>SAP HANA</li>
<li class="d0"><i></i><svg><use href="#ms"/></svg>MS SQL Server</li>
<li class="d0 end"><i></i><svg><use href="#ora"/></svg>Oracle</li>
</ul>
<div class="sb"><i class="up"></i><s class="p1"></s><b class="h1"></b><s class="fill"></s><i class="dn"></i></div>
</div>
<div class="hsplit"></div>
<div class="dockhead lay"><span>Layers</span><svg><use href="#float"/></svg><svg><use href="#close"/></svg></div>
<div class="minibar"><svg><use href="#brush"/></svg><svg><use href="#grp"/></svg><svg><use href="#eye"/></svg><svg><use href="#funneld"/></svg><svg><use href="#eps"/></svg><i class="ar"></i><svg><use href="#treedn"/></svg><svg><use href="#treeup"/></svg><svg><use href="#reml"/></svg></div>
<div class="box layers">
<ul>
<li class="on"><i></i><em><svg><use href="#tick"/></svg></em><span class="sw"><i class="pt"></i></span><b><u>airports</u></b></li>
<li class="no"><i></i><em></em><span class="sw"><i class="ln y"></i></span><b>Clipped</b><svg class="memo"><use href="#mem"/></svg></li>
<li class="no"><i></i><em></em><span class="sw f1"></span><b>mixed_trees</b></li>
<li class="no"><i></i><em></em><span class="sw f2"></span><b>evergreen</b></li>
<li class="no"><i></i><em></em><span class="sw f3"></span><b>deciduous</b></li>
<li class="no"><i></i><em></em><span class="sw"><i class="ln g"></i></span><b>railroads</b></li>
<li><i></i><em><svg><use href="#tick"/></svg></em><span class="sw f4"></span><b>regions</b></li>
<li class="no"><i class="cl"></i><em></em><span class="sw"><svg><use href="#lpg"/></svg></span><b>trees</b></li>
</ul>
</div>
</aside>
<div class="vsplit"></div>

<section class="canvas">
<div class="msg"><svg class="chk" viewBox="0 0 24 24"><path d="M1 6l6 6L23 1 8 22z" fill="#2fd02f" stroke="#14731c" stroke-width="1.200"/></svg><span><b>Layer Exported:</b> Successfully saved vector layer to <a>E:\qgis_cw4\mixed_trees.shp</a></span><svg class="x" viewBox="0 0 18 18"><circle cx="9" cy="9" r="8.700" fill="#33382f"/><path d="M5.800 5.800l6.400 6.400M12.200 5.800l-6.400 6.400" stroke="#fff" stroke-width="2.600"/></svg></div>
<svg class="map" viewBox="299 188 1358 815">
<path d="M298 188H918V1003H298z" fill="#90502c"/><path d="M918 188h443v4H918z" fill="#90502c"/>
<g class="geo" transform="translate(295 155) scale(.3954 .33333)">
<path class="sea" d="M5 236L12 245 22 253 36 262 60 272 80 284 98 300 112 306 125 316 140 323 165 325 175 320 190 313 205 305 225 298 240 302 262 308 275 305 285 308 295 310 305 318 316 328 325 335 332 350 335 365 340 371 348 366 349 350 355 345 352 337 345 337 340 325 330 318 322 308 330 300 335 297 350 295 351 303 347 310 353 322 362 328 370 334 376 350 374 368 377 397 383 388 395 382 398 370 402 352 415 340 430 333 445 318 456 312 465 303 480 299 500 283 512 279 516 287 522 292 540 291 546 280 550 275 560 262 568 256 573 256 580 265 588 277 595 279 596 290 600 300 602 325 597 345 585 358 576 358 573 363 565 365 572 372 555 372 545 368 537 362 530 358 523 365 522 382 514 392 514 400 520 390 532 391 542 400 547 412 555 425 564 440 570 455 570 480 568 510 573 530 580 560 580 598 573 612 565 620 557 632 548 635 546 645 540 655 530 667 518 673 500 671 485 675 470 670 455 672 440 670 428 674 416 674 427 665 433 657 420 648 405 637 404 655 390 672 385 680 380 692 365 712 350 723 343 722 333 727 330 743 318 752 306 766 290 766 270 767 262 755 250 748 240 730 235 712 222 706 212 693 203 687 175 687 155 693 145 706 137 712 133 726 130 740 120 744 112 755 103 768 98 785 90 805 87 830 91 845 85 850 91 865 80 870 75 884 65 878 55 878 35 895 22 910 15 925 5 937z"/>
<path class="sea" d="M5 148L13 158V181L5 180z"/>
<path class="isl" d="M360 620L370 607 385 605 392 609 400 610V625L395 635 375 634 365 627zM482 293L497 286 488 297zM236 730L250 728 256 742 245 746zM262 757L268 758 269 767 262 766zM127 723L135 716 138 726 128 731zM78 847L88 845 85 858 76 866zM66 857L71 860 68 868zM14 278L19 277 18 284zM529 476L533 477 533 483zM62 872L70 871 75 880z"/>
<path class="bnd" d="M615 98L723 109 724 98M768 98L765 165 743 163 737 265 715 264 711 315 690 313 678 519 700 521 694 598 673 597 670 622 651 620 648 646 607 641 604 665 583 663 579 740 556 738 550 819 540 818 538 847 532 847 523 950 516 949 508 1052 522 1053 516 1131 709 1153 711 1120 801 1128 803 1102 970 1112V1146L1130 1153 1220 1156H1356V1116L1398 1117 1399 1090H1437V1066H1442M365 712L386 714V741L404 743V770L423 772V799L550 815M1540 618H1526V670L1453 672V722H1461L1462 761H1483L1484 773H1505L1506 822 1443 946 1540 944M1443 946V1100L1447 1260M560 1138L563 1155 575 1167 590 1169 597 1168 598 1180 590 1181 575 1178 548 1192 530 1195 515 1203 500 1213 485 1230 460 1235 440 1241 425 1242 405 1249 385 1254 365 1250 345 1240 322 1238 318 1222 300 1223 285 1220 270 1233 255 1235 245 1232 230 1236 215 1229 205 1225 203 1235 193 1240 190 1258M133 1250L140 1246 155 1249 170 1258 175 1265"/>
<g class="dot"><ellipse cx="569" cy="103" rx="8.600" ry="10"/><ellipse cx="568" cy="243" rx="8.600" ry="10"/><ellipse cx="98" cy="291" rx="8.600" ry="10"/><ellipse cx="465" cy="300" rx="8.600" ry="10"/><ellipse cx="1014" cy="342" rx="8.600" ry="10"/><ellipse cx="1021" cy="435" rx="8.600" ry="10"/><ellipse cx="579" cy="558" rx="8.600" ry="10"/><ellipse cx="1527" cy="216" rx="8.600" ry="10"/><ellipse cx="1514" cy="603" rx="8.600" ry="10"/><ellipse cx="131" cy="819" rx="8.600" ry="10"/><ellipse cx="617" cy="933" rx="8.600" ry="10"/><ellipse cx="1103" cy="893" rx="8.600" ry="10"/><ellipse cx="1146" cy="879" rx="8.600" ry="10"/><ellipse cx="240" cy="1056" rx="8.600" ry="10"/></g>
</g>
<g class="geo" transform="translate(295 570) scale(.3986 .33333)">
<path class="sea" d="M5 300L12 305 15 322 28 340 30 352 38 370 50 383 65 402 64 408 54 413 55 435 60 448 72 460 88 466 105 470 140 473 165 471 190 468 205 460 212 454 232 449 237 434 245 440 262 438 267 428 272 422 288 427 302 432 307 448 315 460 313 472 318 480 325 498 330 510 333 530 333 550 340 575 348 600 340 610 333 618 325 625 315 632 313 648 303 660 301 680 305 700 310 715 320 726 323 738 321 765 322 800 314 815 308 830 300 842 290 845 290 851 304 853 315 862 316 877 328 875 340 868 370 852 366 847 372 838 378 834 390 823 404 819 415 812 424 801 437 797 443 815 448 803 455 795 468 782 480 770 498 760 512 750 517 762 511 765 517 775 508 782 518 790 523 800 531 796 534 810 546 809 550 828 560 842 572 834 580 825 583 808 581 798 600 796 600 808 596 826 608 832 615 840 625 858 632 875 640 900 650 930 657 950 662 960 680 968 690 966 698 957 706 942 701 940 698 915 693 890 687 873 698 869 702 858 705 855 704 828 715 826 725 818 730 808 738 790 748 785 752 774 765 780 763 786 752 787 750 795 744 805 742 820 733 840 733 850 745 856 755 870 760 885 762 898 770 907 780 911 800 905 820 894 840 880 865 873 876 864 890 855 912 848 918 833 928 832 931 814 943 812 945 816 937 820 934 835 930 855 924 866 922 882 931 890 918 892 906 908 900 918 890 935 882 944 870 955 862 980 856 1000 858 1022 868 1032 876 1035 873 1047 865 1050 860 1043 855 1050 849 1058 847 1075 843 1110 840 1130 835 1165 829 1190 826 1212 838 1216 839 1236 838 1248 830 1245 829 1231 820 1232 800 1250 785 1272 770 1285 745 1300 745 1310H5z"/>
<path class="sea" d="M4000 385H1524V405L1514 410 1510 420 1500 430 1497 441 1485 447 1476 445 1465 445 1455 437 1452 426 1440 424 1430 433 1442 430 1450 433 1453 445 1466 450 1475 460 1484 462 1487 480 1496 487 1494 500 1488 515 1480 525 1478 540 1460 550 1440 551 1430 553 1410 561 1408 570 1420 572 1424 566 1443 567 1443 580 1441 598 1437 610 1425 615 1415 627 1410 622 1400 622 1394 605 1397 600 1388 588 1390 602 1385 612 1392 615 1375 628 1365 622 1357 627 1370 632 1372 640 1355 652 1338 653 1350 662 1353 675 1346 688 1330 690 1327 700 1320 706 1314 718 1302 735 1300 755 1295 765 1284 776 1292 780 1298 805 1305 795 1318 800 1335 800 1341 795 1355 792 1359 803 1368 812 1380 818 1390 825 1397 838 1405 850 1410 858 1400 864 1403 870 1400 885 1397 895 1385 915 1375 925 1360 930 1350 935 1330 935 1328 948 1331 965 1312 970 1311 988 1318 997 1300 1005 1292 1019 1278 1025 1275 1035 1288 1028 1302 1024 1297 1050 1285 1055 1280 1043 1280 1065 1292 1078 1285 1090 1275 1063 1263 1055 1275 1090 1255 1065 1262 1095 1240 1095 1232 1108 1215 1110 1200 1104 1185 1105 1177 1118 1178 1130 1175 1148 1160 1160 1155 1157 1145 1165 1140 1180 1150 1190 1130 1197 1120 1185 1108 1178 1110 1200 1103 1213 1092 1215 1085 1245 1073 1235 1062 1247 1050 1242 1040 1250 1048 1260 1047 1277 1035 1270 1020 1272 1005 1288 990 1310H4000z"/>
<path class="isl" d="M405 892L403 870 410 845 430 838 460 820 445 858 430 888 418 890zM490 845L496 850 494 862 488 857zM503 850L511 863 509 876 503 868zM544 888L547 890 546 896zM519 812L524 822 521 824zM36 402L39 420 38 402zM41 425L48 455 55 465 47 440zM69 492L77 498 71 499zM299 660L308 645 306 668zM1371 703L1380 703 1382 692 1392 693 1401 705 1395 716 1382 718 1377 711zM1484 462L1495 463 1496 484 1487 478zM274 838L292 840 290 853 272 852zM1010 1298L1027 1276 1020 1292zM1352 941L1358 943 1353 947zM1372 932L1377 934 1373 937z"/>
<path class="isl" d="M1222 1310L1225 1270 1240 1250 1255 1240 1265 1228 1290 1215 1318 1218 1322 1245 1310 1252 1326 1255 1330 1275 1336 1310zM1350 1150L1335 1156 1328 1170 1328 1200 1350 1210 1368 1230 1366 1212 1378 1205 1378 1170 1364 1152zM1524 926L1505 928 1492 942 1494 960 1510 968 1500 975 1484 975 1484 985 1492 1004 1496 1022 1480 994 1468 990 1464 997 1478 1012 1486 1028 1474 1024 1450 1008 1446 1014 1466 1036 1476 1056 1460 1046 1440 1022 1436 1034 1455 1060 1462 1076 1448 1070 1430 1048 1422 1053 1424 1066 1440 1086 1425 1080 1408 1068 1398 1078 1396 1092 1425 1100 1438 1094 1446 1110 1460 1120 1478 1117 1485 1090 1500 1055 1505 1050 1506 1075 1518 1085 1540 1080V926z"/>
<path class="isl" d="M1344 1310L1342 1262 1350 1240 1366 1250 1387 1255 1378 1240 1362 1222 1375 1225 1382 1205 1395 1215 1410 1196 1398 1180 1400 1172 1412 1184 1422 1198 1425 1188 1412 1170 1380 1142 1381 1134 1398 1142 1392 1126 1397 1122 1424 1145 1436 1166 1446 1172 1442 1156 1412 1122 1416 1114 1450 1138 1464 1132 1472 1150 1464 1172 1470 1192 1478 1160 1488 1144 1506 1158 1516 1140 1514 1122 1538 1135 1526 1150 1530 1170 1555 1175 1528 1195 1530 1220 1562 1220 1555 1250 1545 1282 1528 1268 1500 1270 1480 1255 1455 1262 1448 1280 1470 1270 1500 1285 1510 1310z"/>
<path class="bnd" d="M190 2L192 10 185 18 170 17 160 8 150 5 135 8 131 22 138 45 130 55 118 56 110 70 102 62 98 75 105 82 104 95 95 105 75 110 55 115 47 113 38 103 25 98 5 101M1437 0L1434 65 1437 90 1526 88M1437 90L1420 73H1378V168L1384 170 1385 270 1390 272V375L1376 377 1374 478 1361 480 1359 583 1345 584 1344 607 1324 609V660L1303 661 1302 685 1266 686V738H1223V789L1228 790 1229 891 1236 893V918H1341V892H1389V858L1410 857M1278 920L1277 975 1262 978V992L1245 1010 1220 1016V1023L1185 1030 1175 1043 1155 1044V1053L1142 1055 1141 1095 1147 1080 1140 1145 1128 1147 1120 1162 1090 1168 1083 1205 1065 1207 1063 1228 1040 1250 1005 1246 985 1270 975 1298M415 805L421 759 443 760 444 737 466 738 470 685 478 684 480 662 501 662 503 640 510 640 513 588 535 589 539 539 568 541 572 491 594 492 598 440 604 440 607 417 628 418 631 368 653 368 655 344 678 345 682 295 687 295 689 269 710 270 711 244 727 244 729 221 848 230 850 255 869 257 871 232 892 232 894 207 936 209 937 235 1075 242 1140 245 1385 246M1076 242L1073 430 1067 603 1046 604 1045 628 1003 627 1001 653 980 653 978 678 968 678 966 703 925 702 922 727 903 727 900 777 910 779 908 850M930 840L1020 844 1018 923 900 918"/>
<g class="dot"><ellipse cx="665" cy="12" rx="8.600" ry="10"/><ellipse cx="371" cy="218" rx="8.600" ry="10"/><ellipse cx="1128" cy="186" rx="8.600" ry="10"/><ellipse cx="1203" cy="590" rx="8.600" ry="10"/><ellipse cx="1159" cy="705" rx="8.600" ry="10"/><ellipse cx="743" cy="779" rx="8.600" ry="10"/><ellipse cx="278" cy="846" rx="8.600" ry="10"/><ellipse cx="976" cy="903" rx="8.600" ry="10"/><ellipse cx="1518" cy="1185" rx="8.600" ry="10"/></g>
</g>
</svg>
</section>

<aside class="right">
<div class="dockhead"><span>Processing Toolbox</span><svg><use href="#float"/></svg><svg><use href="#close"/></svg></div>
<div class="minibar pt"><svg><use href="#redgear"/></svg><svg class="a"><use href="#py"/></svg><svg class="b"><use href="#clock"/></svg><span class="down"><svg><use href="#paper"/></svg></span><i class="sep"></i><svg class="c"><use href="#note"/></svg><i class="sep"></i><svg class="d"><use href="#wrench"/></svg></div>
<div class="search">lit<svg viewBox="0 0 14 10"><path d="M4 0h10v10H4L0 5z" fill="#888"/><path d="M6 2.500l5 5M11 2.500l-5 5" stroke="#fff"/></svg></div>
<div class="box algs">
<ul><li class="alg"><svg><use href="#gear"/></svg>Split lines by maximum length</li><li class="alg"><svg><use href="#gear"/></svg>Subdivide</li><li>Vector overlay</li><li class="alg"><svg><use href="#gear"/></svg>Split with lines</li><li>Vector tiles</li><li class="alg"><svg><use href="#gear"/></svg>Download vector tiles</li><li>GRASS</li><li class="last">Raster (r.*)</li></ul>
<div class="sb"><i class="up"></i><s class="p2"></s><b class="h2"></b><s class="fill"></s><i class="dn"></i></div>
</div>
<div class="hsplit"></div>
<div class="dockhead vw"><span>Viewer</span><svg><use href="#float"/></svg><svg><use href="#close"/></svg></div>
<div class="box res"></div><div class="hsplit small"></div><div class="box res2"></div>
</aside>
</main>

<footer class="status">
<span class="locate"><svg viewBox="0 0 12 12"><circle cx="5" cy="5" r="3.800" fill="none" stroke="#777"/><path d="M7.500 8l3.500 3.500" stroke="#777" stroke-width="1.300"/></svg>Type to locate (Ctrl+K)</span>
<span class="s1">Coordinate</span><span class="field f1">2780918&nbsp; 4753917</span><svg class="mouse" viewBox="0 0 16 16"><path d="M2 2l11 12M12 1L2 10" stroke="#444" stroke-width="1.500"/><ellipse cx="9.500" cy="9.500" rx="3.500" ry="5" transform="rotate(-35 9.500 9.500)" fill="#ddd" stroke="#333" stroke-width="1.300"/></svg>
<span class="s2">Scale</span><span class="combo c2"><b>1:4249554</b><em><i class="ar"></i></em></span><svg class="lock" viewBox="0 0 14 16"><path d="M3.500 8V5a3.500 3.500 0 0 1 7 0v3" fill="none" stroke="#777" stroke-width="1.500"/><rect x="1" y="7" width="12" height="8.500" rx="1.500" fill="#555"/></svg>
<span class="s3">Magnifier</span><span class="spin w83"><b>100%</b><em></em></span><span class="s4">Rotation</span><span class="spin w82"><b>0,0 °</b><em></em></span>
<span class="cb"><svg><use href="#tick"/></svg></span><span class="s5">Render</span><svg class="gl" viewBox="0 0 16 16"><g fill="none" stroke="#666"><circle cx="8" cy="8" r="5.500" fill="#bbb"/><ellipse cx="8" cy="8" rx="2.500" ry="5.500"/><path d="M0 8h16M8 1v14M3.500 5h9M3.500 11h9"/></g></svg><span class="s6">EPSG:2964</span><svg class="bub" viewBox="0 0 17 15"><path d="M8.500 1c10 0 10 11 3 11.500V15l-4-2.500C-2 12-1 1 8.500 1z" fill="#555"/><path d="M4 6.500h2M7.500 6.500h2M11 6.500h2" stroke="#fff" stroke-width="2"/></svg>
</footer>

<section class="dialog">
<div class="dtitle"><svg class="i16"><use href="#logo"/></svg><span class="cap">Group Stats</span><svg class="dctl" viewBox="0 0 104 12"><g fill="none" stroke="#111" stroke-width="1.100"><path d="M1 6.500h10"/><rect x="46.500" y="1.500" width="9" height="9"/><path d="M92 1l10 10M102 1L92 11"/></g></svg></div>
<nav class="dmenu"><span><u>D</u>ata</span><span>Feat<u>u</u>res</span><span>W<u>i</u>ndow</span><span>He<u>l</u>p</span></nav>
<div class="dbody">
<div class="grid">
<div class="hd"><span class="h1c">1<i></i></span><span class="h2c">2</span></div>
<div class="rows"><div class="vh"><span>1<small>-</small></span><span>2</span></div>
<div class="cells"><span class="k h">use</span><span class="k"></span><span class="k">Military</span><span class="v">593,25</span></div></div>
</div>
<div class="dsplit"></div>
<div class="cp">
<div class="cphead"><span>Control panel</span><svg><use href="#float"/></svg><svg><use href="#close"/></svg></div>
<div class="form">
<label class="lay2">Layers</label><div class="select">airports<i class="ar"></i></div><label class="fld">Fields</label>
<div class="box fields"><ul class="items"><li><svg><use href="#pie"/></svg>elev</li><li><svg><use href="#pie"/></svg>fk_region</li><li><svg><use href="#pie"/></svg>gid</li><li><svg><use href="#pie"/></svg>id</li><li><svg><use href="#doc"/></svg>name</li><li class="on"><svg><use href="#doc"/></svg>use</li><li><svg><use href="#bars"/></svg>average</li><li><svg><use href="#bars"/></svg>count</li><li><svg><use href="#bars"/></svg>max</li><li><svg><use href="#bars"/></svg>median</li><li><svg><use href="#bars"/></svg>min</li><li><svg><use href="#bars"/></svg>stand.dev.</li></ul>
<div class="sb"><i class="up"></i><b class="h3"></b><s class="fill"></s><i class="dn"></i></div></div>
<div class="two top"><div class="half"><button class="filt">Filter</button></div><div class="half">Columns</div></div>
<div class="two"><div class="area txt">"use"&nbsp; LIKE 'Military'</div><div class="area"></div></div>
<div class="two mid"><div class="half">Rows</div><div class="half">Value<span class="cb"></span>use NULL values</div></div>
<div class="two"><div class="area"><ul class="items"><li><svg><use href="#doc"/></svg>use</li></ul></div><div class="area"><ul class="items"><li><svg><use href="#pie"/></svg>elev</li><li><svg><use href="#bars"/></svg>average</li></ul></div></div>
<div class="opt"><span class="cb"></span>Use only selected features<button class="clr">Clear</button></div>
<button class="calc">Calculate</button>
</div>
</div>
</div>
<div class="dstat">Calculate... 100% |&nbsp; generate view...100% |&nbsp; done.</div>
</section>
</body>
</html>
```

FILE: styles.css
```css
*{box-sizing:border-box}
html,body{margin:0;height:100%}
body{width:1917px;height:1032px;overflow:hidden;position:relative;display:flex;flex-direction:column;background:#efefef;color:#000;font:11px/14px "DejaVu Sans Condensed","DejaVu Sans",sans-serif;font-stretch:condensed;letter-spacing:-.3px}
ul{list-style:none;margin:0;padding:0}
i,em{font-style:normal;display:block}
u{text-underline-offset:1px}
svg{display:block;flex:none}
.paints{position:absolute}
.sprite{display:none}
.titlebar{height:23px;flex:none;display:flex;align-items:center;background:#f2f2f2;padding:0 5px 0 2px;color:#777}
.i16{width:17px;height:17px}
.cap{font:12px/16px "Open Sans","Noto Sans",sans-serif;letter-spacing:-.35px;margin-left:6px}
.winctl{width:116px;height:14px;margin:-2px 0 0 auto}
.menubar{height:18px;flex:none;display:grid;align-items:center;background:#eee;border-bottom:1px solid #d4d4d4;color:#888;padding:1px 0 0 9.500px;grid-template-columns:48px 32px 36px 41px 53px 47px 45px 46px 60px 36px 39px 33px 65px 40px}
.tb{height:39px;flex:none;display:flex;align-items:center;background:linear-gradient(#fafafa,#ededed);border-bottom:1px solid #b6b6b6}
.ic{width:24px;height:24px;margin:0 4.45px}
.off{opacity:.42}
.grip{width:16.5px;height:16px;flex:none;background:radial-gradient(circle,#aaa 34%,transparent 40%) 8px 0/3px 3px repeat;background-clip:content-box;padding:0 2px 0 8px}
.t1 .grip{width:17.500px}
.grip.first,.t1 .grip.first{width:13px;padding:0 4px 0 4px;background-position:4px 0}
.ar{width:12px;height:12px;flex:none;display:flex;align-items:center;justify-content:center}
.ar::before{content:"";border:4px solid transparent;border-top:5px solid #4a4a4a;border-bottom:0}
.ar.mid{opacity:.6}
.sep{width:8px;height:20px;flex:none;border-left:1px solid #ccc;margin-left:4px;margin-right:-4px}
.sep.thin{width:6px}
.down{flex:none;height:31px;width:32px;margin-right:.9px;display:flex;align-items:center;justify-content:center;background:#d9d9d9;border:1px solid #a8a8a8;border-radius:2px}
.down .ic{margin:0}
.down.dd{width:12px;margin-right:0}
.t3{height:38px;letter-spacing:-.1px;font-size:11px}
.dark{flex:none;height:19px;background:#636363;color:#eee;display:flex;align-items:center;padding-left:2px;gap:5px}
.knob{width:11px;height:11px;border-radius:50%;background:#aaa;border:3px solid #444;outline:1px solid #777}
.rgb{width:58px;margin-left:.5px}.roi{width:59px;margin-right:1px}.prev{width:66px;margin:0 1px 0 0}
.combo,.spin,.field{flex:none;height:20px;background:#fff;border:1px solid #aeaeae;border-radius:3px;display:flex;align-items:center}
.combo b,.spin b{flex:1;font-weight:400;padding-left:4px;white-space:nowrap}
.combo em{border-left:1px solid #aeaeae;height:100%;width:20px;display:flex;align-items:center;justify-content:center}
.spin em{border-left:1px solid #aeaeae;height:100%;width:14px;display:flex;flex-direction:column;align-items:center;justify-content:center;gap:3px}
.spin em::before{content:"";border:4px solid transparent;border-bottom:5px solid #666;border-top:0}
.spin em::after{content:"";border:4px solid transparent;border-top:5px solid #666;border-bottom:0}
.c1{width:79px;margin:0 2px}
.lab{flex:none;height:19px;background:#555;color:#fff;font-weight:700;display:flex;align-items:center;justify-content:flex-end;letter-spacing:-.4px}
.ld{width:26px;margin-left:1px}.lm{width:23.500px;margin-left:1px}.lx{width:27px;margin-left:1.500px}.lt{width:10px;margin-left:2px}
.w100{width:100px}.w60{width:60px}.w50{width:50px}.w83{width:84px}.w82{width:83px}
.t3 .pv{margin-left:6px}
.t3 .g1{margin-right:5.500px}
.t3 .nx{margin:0 4.900px}
.work{flex:none;height:847px;display:flex;padding-top:1px}
.left{width:291px;flex:none;display:flex;flex-direction:column}
.dockhead{height:20px;display:flex;align-items:center;padding:0 0 0 3px;flex:none;gap:2px}
.dockhead span{flex:1;letter-spacing:-.15px}
.dockhead svg,.cphead svg{width:12px;height:12px}
.left .dockhead{padding-right:1.500px}
.minibar{height:28px;flex:none;display:flex;align-items:center;padding-left:8px;gap:9.200px;margin-bottom:2px}
.minibar svg{width:16px;height:16px}
.minibar .ar{margin:0 -6px 0 -5px}
.box{background:#fff;border:1px solid #b0b0b0;overflow:hidden}
.browser{height:270px;display:flex;flex:none}
.tree{flex:1;overflow:hidden;padding-top:1px}
.tree li{height:18px;display:flex;align-items:center}
.tree .end{height:16px}
.tree i{width:16px;height:12px;flex:none}
.tree svg{width:16px;height:16px;margin:-1px 5px 0 3px}
.tree .d1{padding-left:16px}.tree .d2{padding-left:32px}.tree .d3{padding-left:48px}
.tree .on{background:#efefef;width:171px}
.op::before{content:"";display:block;margin:3px 0 0 4px;border:4px solid transparent;border-top:5px solid #555;border-bottom:0;width:0}
.cl::before{content:"";display:block;margin:2px 0 0 6px;border:4px solid transparent;border-left:5px solid #555;border-right:0;width:0}
.sb{width:14px;flex:none;border-left:1px solid #b0b0b0;background:#e3e3e3;display:flex;flex-direction:column}
.sb i{height:14px;flex:none;background:#fafafa;display:flex;align-items:center;justify-content:center}
.sb .up{border-bottom:1px solid #b0b0b0}.sb .dn{border-top:1px solid #b0b0b0}
.sb .up::before{content:"";border:4px solid transparent;border-bottom:4px solid #444;border-top:0}
.sb .dn::before{content:"";border:4px solid transparent;border-top:4px solid #444;border-bottom:0}
.sb b{background:linear-gradient(90deg,#fff,#f3f3f3);border:solid #b0b0b0;border-width:1px 0;flex:none}
.sb s.fill{flex:1}
.p1{height:67px}.h1{height:107px}.p2{height:46px;flex:none}.h2{height:42px}.sb .h3{height:227px;border-top:0}
.hsplit{height:7px;flex:none;background:radial-gradient(circle,#aaa 34%,transparent 40%) 0 2px/3px 3px repeat-x content-box;padding:0 calc(50% - 8px)}
.lay{height:20px}
.lay + .minibar{height:28px}
.layers{flex:1}
.layers li{height:18px;display:flex;align-items:center}
.layers li>i{width:21px;flex:none;height:12px}
.layers em,.cb{width:14px;height:14px;background:#fff;border:1px solid #b8b8b8;flex:none}
.layers em{margin-left:2px}
.layers em svg,.cb svg{width:12px;height:12px}
.sw{width:16px;height:16px;margin:0 6px 0 6px;display:flex;align-items:center;justify-content:center;flex:none}
.sw svg{width:16px;height:16px}
.sw .pt{width:7px;height:7px;border-radius:50%;background:#e88b96;border:1px solid #7a5a5e}
.sw .ln{height:2px;width:16px}.y{background:#ecdcae}.g{background:#cfe2c4}
.f1,.f2,.f3,.f4{border:1px solid #554}
.sw.f1{background:#997db8;border-color:#66537c}.sw.f2{background:#e3568a;border-color:#96395b}.sw.f3{background:#c53a38;border-color:#7c2726}.sw.f4{background:#90502c;border-color:#5e341d}
.layers b{flex:1;letter-spacing:.1px;padding-top:2px}
.layers .on{background:#efefef}
.no b{font-style:italic;color:#808080}
.memo{width:17px;height:17px;margin-right:4px}
.vsplit{width:7px;flex:none;background:radial-gradient(circle,#aaa 34%,transparent 40%) 2px 0/3px 3px repeat-y content-box;padding:416px 0 414px}
.canvas{width:1360px;flex:none;display:flex;flex-direction:column;border:1px solid #b0b0b0;border-top:0;background:#fff}
.msg{height:30px;flex:none;margin:0 0 0 -1px;display:flex;align-items:center;background:#dff0d8;border:1px solid #8a9a86;padding:0 21px 0 8px;letter-spacing:-.18px}
.chk{width:23px;height:19px;margin-right:11px}
.msg>span{flex:1;padding-top:1px}
.msg b{letter-spacing:-.05px}
.msg a{color:#2a8a10;text-decoration:underline;letter-spacing:0}
.msg .x{width:18px;height:18px}
.map{width:1358px;flex:1;min-height:0}
.geo path,.geo ellipse{vector-effect:non-scaling-stroke}
.sea{fill:#fff;stroke:#2c2724;stroke-width:1}
.isl{fill:#90502c;stroke:#2c2724;stroke-width:.9}
.bnd{fill:none;stroke:#232323;stroke-width:1.050}
.dot ellipse{fill:#f3a6b2;stroke:#3a2a28;stroke-width:1}
.right{width:259px;flex:none;display:flex;flex-direction:column;padding-left:6px}
.right .dockhead{padding-right:0;gap:2px;margin-right:-1px}
.right .box{border-right:0}
.pt.minibar{gap:0;height:28px;flex:none;padding-left:6.500px;margin-bottom:3px}
.pt.minibar svg{width:16px;height:16px}
.pt .a{margin-left:11px}.pt .b{margin-left:8px}
.pt .down{width:24px;height:24px;margin-left:5px}
.pt .sep{margin:0;width:2px;margin-left:5px}
.pt .c{margin-left:6px}.pt .d{margin-left:8px}
.search{height:20px;flex:none;background:#fff;border:1px solid #b0b0b0;border-right:0;display:flex;align-items:center;justify-content:space-between;padding:1px 5px 0 39px}
.search svg{width:14px;height:10px}
.algs{height:142px;flex:none;display:flex;margin-top:1px}
.algs ul{flex:1;padding:1px 0 0 45px;letter-spacing:-.38px}
.algs li{height:18px;display:flex;align-items:center;white-space:nowrap}
.algs svg{width:15px;height:15px;margin-right:5px}
.algs .last{height:15px;margin-left:-3px;align-items:flex-start}
.algs .sb{width:12px}
.right .hsplit{height:6px}
.vw{height:20px}.right .vw{padding-left:41px}
.res{height:301px;flex:none}.right .small{height:5px}.res2{flex:1}
.status{flex:1;display:flex;align-items:center;white-space:nowrap;padding:1px 0 0 4px}
.status>span,.status>svg{flex:none}
.locate{width:200px;height:22px;background:#fff;border:1px solid #aaa;border-radius:3px;display:flex;align-items:center;color:#777;padding-left:7px;gap:8px}
.locate svg{width:13px;height:13px}
.s1{margin-left:913px;width:57px}
.field.f1{width:104px;padding-left:5px;border:1px solid #aeaeae}
.mouse{width:15px;height:16px;margin-left:5px}
.s2{margin-left:13px;width:30px}
.c2{width:80px}.c2 em{width:19px}
.lock{width:14px;height:16px;margin-left:11px}
.s3{margin-left:8px;width:48px}.s4{width:51px;margin-left:8px}
.status .cb{margin-left:6.500px}.s5{margin-left:4px;width:53px}
.gl{width:16px;height:16px;margin-left:-1px}.s6{width:54px}
.bub{width:17px;height:15px;margin-left:23px}
.dialog{position:absolute;left:903px;top:189px;width:801px;height:745px;background:#efefef;border:1px solid #a5a5a5;border-left-color:#bbb;border-top-color:#ddd;border-radius:8px;display:flex;flex-direction:column;box-shadow:0 16px 40px rgba(0,0,0,.32),0 2px 20px rgba(0,0,0,.18);overflow:hidden}
.dtitle{height:29px;flex:none;background:#f3f3f3;display:flex;align-items:center;padding:0 16px 2px 7px}
.dctl{width:104px;height:12px;margin-left:auto}
.dmenu{height:18px;flex:none;border-bottom:1px solid #d4d4d4;display:grid;align-items:center;padding:1px 0 0 8px;grid-template-columns:37px 57.500px 51.500px 50px}
.dbody{display:flex;padding:9px 0 0 8px;height:665px;flex:none}
.grid{width:474px;height:656px;background:#fff;border:1px solid #b0b0b0;display:flex;flex-direction:column}
.hd{height:17px;flex:none;background:#efefef;display:flex}
.hd span{background:linear-gradient(#fdfdfd,#ededed);border-right:1px solid #bbb;border-bottom:1px solid #b0b0b0;display:flex;align-items:center;justify-content:center}
.hd .h1c{width:52px;gap:12px;padding-left:18px}
.h1c i{border:4px solid transparent;border-bottom:4px solid #444;border-top:0;margin-top:-3px}
.hd .h2c{width:41px;border-right:0}
.rows{flex:1;display:flex}
.vh{width:11px;background:#efefef}
.vh span{display:flex;flex-direction:column;align-items:center;justify-content:center;height:30px;background:linear-gradient(#fdfdfd,#ededed);border-right:1px solid #bbb;border-bottom:1px solid #b0b0b0;line-height:13px}
.vh small{font-size:8px;line-height:6px}
.cells{display:grid;grid-template-columns:41px 41px;grid-auto-rows:30px;align-content:start}
.cells span{border-right:1px solid #c0b8b8;border-bottom:1px solid #c0b8b8;display:flex;align-items:center;padding:2px 0 0 3px}
.k{background:#f5eaea}.k.h{font-weight:700}
.dsplit{width:18px;flex:none;background:radial-gradient(circle,#aaa 34%,transparent 40%) 10px 0/3px 3px repeat-y content-box;padding:321px 0 319px}
.cp{flex:1;min-width:0}
.cphead{height:14px;display:flex;align-items:center;margin:-6px 1px 0 0;gap:2px}
.cphead span{flex:1;letter-spacing:-.2px}
.form{padding:0 8px 0 6px;display:flex;flex-direction:column;margin-top:10px}
.form label{margin-left:-.5px}
.lay2{height:20px;padding-top:2px}
.select{height:22px;display:flex;align-items:center;justify-content:space-between;padding:0 6px 0 4px;background:linear-gradient(#fff,#eee);border:1px solid #aeaeae;border-radius:3px;margin-top:1px}
.fld{height:25px;padding-top:6px}
.fields{height:313px;display:flex;flex:none}
.items{flex:1;letter-spacing:-.2px}
.items li{height:26px;display:flex;align-items:center;padding-left:4px;gap:7px}
.items svg{width:22px;height:23px;margin-top:-1px}
.items .on{background:#efefef}
.two{display:grid;grid-template-columns:1fr 1fr;gap:6px;flex:none}
.half{display:flex;align-items:center}
.top{height:33px}
.mid{height:30px}
.half .cb{margin:0 4px 0 11px}
button{font:inherit;letter-spacing:inherit;color:inherit;padding:0;background:linear-gradient(#fff,#eee);border:1px solid #aeaeae;border-radius:3px}
.filt{width:38px;height:20px}
.area{height:71px;background:#fff;border:1px solid #b0b0b0}
.txt{padding:5px 4px}
.opt{height:33px;display:flex;align-items:center;gap:4px;letter-spacing:-.08px}
.clr{width:80px;height:21px;margin-left:auto}
.calc{height:21px;margin-top:-1px}
.dstat{padding:14px 0 0 4px;letter-spacing:.08px}
```
